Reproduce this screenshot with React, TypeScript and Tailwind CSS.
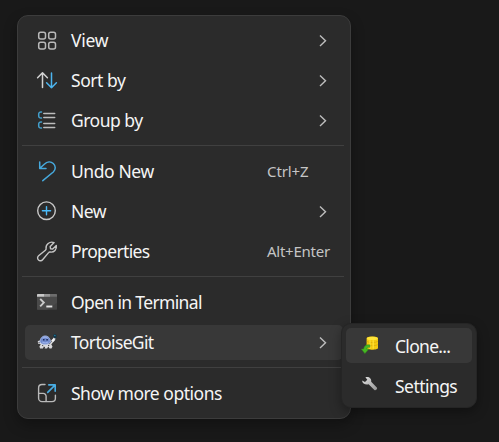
import type { ReactNode } from 'react';

const svg = 'block h-5 w-5 shrink-0 overflow-visible';

const ViewIcon = () => (
  <svg className={svg} viewBox="0 0 20 20" fill="none" stroke="#b9b9b9" strokeWidth="1.5">
    <rect x="1.7" y="1.2" width="6.8" height="6.8" rx="2" />
    <rect x="11.7" y="1.2" width="6.8" height="6.8" rx="2" />
    <rect x="1.7" y="11.2" width="6.8" height="6.8" rx="2" />
    <rect x="11.7" y="11.2" width="6.8" height="6.8" rx="2" />
  </svg>
);

const SortIcon = () => (
  <svg className={svg} viewBox="0 0 20 20" fill="none" strokeWidth="1.5" strokeLinecap="round" strokeLinejoin="round">
    <path d="M5.5 16.6V1.9M.6 6.8l4.9-5 4.9 5" stroke="#d2d2d2" />
    <path d="M14.5 2v14.7M9.6 11.8l4.9 5 4.9-5" stroke="#4cb5ef" />
  </svg>
);

const GroupIcon = () => (
  <svg className={svg} viewBox="0 0 20 20" fill="none" strokeWidth="1.5" strokeLinecap="round">
    <path d="M4.5.9H4A2.2 2.2 0 0 0 1.7 3.1v1.8A2.2 2.2 0 0 0 4 7.1h.5M4.5 10.9H4a2.2 2.2 0 0 0-2.3 2.2v1.8A2.2 2.2 0 0 0 4 17.1h.5" stroke="#429fcc" />
    <path d="M6.8 2.5h10.9M6.8 6.5h10.9M6.8 12.5h10.9M6.8 16.5h10.9" stroke="#bcbcbc" />
  </svg>
);

const UndoIcon = () => (
  <svg className={svg} viewBox="0 0 20 20" fill="none" stroke="#46a9dd" strokeWidth="1.5" strokeLinecap="round" strokeLinejoin="round">
    <path d="M2.7 0v6.4h6.3M2.9 6.3l4.4-4.1c2.8-2.6 6.5-3 9-.7 2.7 2.5 2.5 6.1 0 8.5L5.8 18.7" />
  </svg>
);

const NewIcon = () => (
  <svg className={svg} viewBox="0 0 20 20" fill="none" strokeWidth="1.4" strokeLinecap="round">
    <circle cx="9.5" cy="8.7" r="8.8" stroke="#c9c9c9" />
    <path d="M9.5 4.6v8.2M5.4 8.7h8.2" stroke="#4cbcfa" />
  </svg>
);

const WrenchIcon = () => (
  <svg className={svg} viewBox="0 0 20 20" fill="none" stroke="#c6c6c6" strokeWidth="1.4" strokeLinejoin="round">
    <path d="M17.1.6l-3.9 4 .3 2.1 2.2.4 3.6-3.6c.8 3.8-2.2 7.1-6.1 6.5-.7-.1-1.2.1-1.6.6l-6 7.1c-1 1.2-2.9 1.4-4.1.3-1.3-1.2-1.2-3.1.1-4.2l6.8-5.6c.5-.4.8-1 .7-1.7-.6-3.8 3.4-7.6 8-5.9Z" />
  </svg>
);

const TerminalIcon = () => (
  <svg className={svg} viewBox="0 0 20 20" fill="none">
    <rect y="1" width="20" height="15.8" rx=".8" fill="#424242" />
    <path d="M0 3.8h20v6L10 16.8H.8a.8.8 0 0 1-.8-.8Z" fill="#4a4a4a" />
    <path d="M.8 1H7v2.8H0v-2A.8.8 0 0 1 .8 1Z" fill="#c8c8c8" />
    <path d="M7 1h6v2.8H7Z" fill="#969696" />
    <path d="M13 1h6.2a.8.8 0 0 1 .8.8v2h-7Z" fill="#6d6d6d" />
    <path d="m3.2 5.9 3.6 3.7-3.6 3.7" stroke="#cacaca" strokeWidth="1.9" />
    <path d="M9.3 13.5h6" stroke="#e4e4e4" strokeWidth="1.9" />
  </svg>
);

const TortoiseIcon = () => (
  <svg className={svg} viewBox="0 0 20 20">
    <path d="M.8 8 3.2 7.6l1.5 3.2h8.1l2-2.6 1.8-3.7 1.8-.4-.2 3-2.6 2.7-1.3 1.6 1.2 2.2-1 2-2-.2-1.2-1.8-1.2 1.8H7.8l-.7-2.1-1.2 2.2-2.8-.1-.7-1.9 1.4-2.3L1 10.8Z" fill="#d9d9dc" />
    <path d="M2.9 9C3.3 5.3 5.1 3 8.2 3c3.1 0 5 2.2 5.3 6-1.7 2.8-8.6 3.3-10.6 0Z" fill="#6f89cb" stroke="#aabde9" strokeWidth=".9" />
    <path d="M5.4 5.3 8 4l3 1.2M5.2 9l3.1 1 3-1.1" stroke="#9db2ec" strokeWidth="1.1" fill="none" />
    <path d="M6 6.7h1.5M9.3 6.7h1.6" stroke="#1f2d60" strokeWidth="1.5" />
    <path d="m1.5 9.7 1.2.1M5.2 12.5l1 .2M11 12.5l1.3-.2M7.2 14l.5.9" stroke="#383840" strokeWidth="1" />
    <path d="m14 7.7 2.4-2.4 1.4 1.4-1.5 2.1Z" fill="#f2f4f6" />
    <path d="m16.3 1.8 2-.8 1.4 1.2-.4 2.9-2 .2-1-1.3Z" fill="#153648" />
    <path d="m17.2 2.3 1.3.5" stroke="#2381a3" strokeWidth="1.1" />
  </svg>
);

const MoreIcon = () => (
  <svg className={svg} viewBox="0 0 20 20" fill="none" strokeWidth="1.4" strokeLinecap="round" strokeLinejoin="round">
    <path d="M8 .5H5A3.4 3.4 0 0 0 1.6 3.9v10.3A3.4 3.4 0 0 0 5 17.6h10a3.4 3.4 0 0 0 3.4-3.4v-3M1.6 9.4h4.6a2.9 2.9 0 0 1 2.9 2.9v5.3" stroke="#b9b9b9" />
    <path d="M11.8.9h6.4v6.4M18 1.1l-7.3 7.3" stroke="#48ade3" strokeWidth="1.6" />
  </svg>
);

const CloneIcon = () => (
  <svg className={svg} viewBox="0 0 20 20">
    <path d="M5.6 2.4C5.6 0 17 0 17 2.4v9.7c0 2.3-11.4 2.3-11.4 0Z" fill="#f3c90f" />
    <ellipse cx="11.3" cy="2.4" rx="5.4" ry="1.6" fill="#ffe53a" />
    <path d="M5.8 5.4c1.7 1.5 9.3 1.5 11 0M5.8 8.6c1.7 1.5 9.3 1.5 11 0" stroke="#d7a708" strokeWidth=".7" fill="none" />
    <path d="M9 4.2v8.5M12.2 4.2v8.5" stroke="#ffe236" strokeWidth="1.2" />
    <path d="M8.9 8.9c-3.9-.4-5.9 1.2-6.3 4.2H.3l3.6 4.5 4-4.5H5.8c.1-1.4 1.3-2 3.1-1.8Z" fill="#45b722" stroke="#318b1b" strokeWidth=".5" />
  </svg>
);

const SettingsIcon = () => (
  <svg className={svg} viewBox="0 0 20 20">
    <defs>
      <linearGradient id="metal" x1="0" y1="0" x2="1" y2="1">
        <stop stopColor="#e2e2e2" />
        <stop offset="1" stopColor="#969696" />
      </linearGradient>
    </defs>
    <path d="M4.4 1.2c3.4-1.1 6.5 1.3 5.8 4.6l5.6 5.8c1.2 1.2-1.1 3.5-2.4 2.3L7.6 8.3C4.5 9.4 1.2 7.3 1.1 4.4L4 6l2.3-2.2Z" fill="url(#metal)" />
  </svg>
);

const Chevron = () => (
  <svg className="ml-auto mr-[16px] block h-[12px] w-[8px]" viewBox="0 0 8 12" fill="none" stroke="#bebebe" strokeWidth="1.4">
    <path d="m1 .6 5.5 5.2L1 11" />
  </svg>
);

const Divider = () => (
  <div className="-ml-[3px] -mr-[1px] h-[11px] pt-1">
    <div className="h-px w-full bg-[#404040]" />
  </div>
);

type RowProps = { icon: ReactNode; label: string; tracking: string; shortcut?: string; shortcutTracking?: string; arrow?: boolean; active?: boolean; sub?: boolean };

function Row({ icon, label, tracking, shortcut, shortcutTracking = '', arrow, active, sub }: RowProps) {
  return (
    <div className="h-10 pb-[3px] pt-[2px]">
      <div className={`flex h-[35px] items-center rounded-[5px] ${sub ? 'pl-[15px]' : 'pl-3'} ${active ? 'bg-[#383838]' : ''}`}>
        {icon}
        <span className={`ml-[14px] whitespace-nowrap text-[17.5px] leading-[24px] text-[#f5f5f5] ${sub ? '' : 'pb-[2px]'} ${tracking}`}>{label}</span>
        {arrow && <Chevron />}
        {shortcut && (
          <span className="ml-auto w-[76px] whitespace-nowrap pb-[2px] text-[15px] leading-5 text-[#c5c5c5]">
            <span className={shortcutTracking}>{shortcut}</span>
          </span>
        )}
      </div>
    </div>
  );
}

export default function App() {
  return (
    <main className="relative h-[442px] w-[499px] overflow-hidden bg-[#191919] pl-[17px] pt-[15px] font-['Noto_Sans','Open_Sans',sans-serif]">
      <section className="h-[404px] w-[334px] rounded-[11px] border border-[#3c3c3c] bg-[#2b2b2b] px-[7px] py-[5px] shadow-[0_6px_14px_rgba(0,0,0,0.3)]">
        <Row icon={<ViewIcon />} label="View" tracking="tracking-[-0.3px]" arrow />
        <Row icon={<SortIcon />} label="Sort by" tracking="tracking-[-0.45px]" arrow />
        <Row icon={<GroupIcon />} label="Group by" tracking="tracking-[-0.5px]" arrow />
        <Divider />
        <Row icon={<UndoIcon />} label="Undo New" tracking="tracking-[-0.42px]" shortcut="Ctrl+Z" shortcutTracking="tracking-[-0.1px]" />
        <Row icon={<NewIcon />} label="New" tracking="tracking-[-0.5px]" arrow />
        <Row icon={<WrenchIcon />} label="Properties" tracking="tracking-[-0.65px]" shortcut="Alt+Enter" shortcutTracking="tracking-[-0.25px]" />
        <Divider />
        <Row icon={<TerminalIcon />} label="Open in Terminal" tracking="tracking-[-0.65px]" />
        <Row icon={<TortoiseIcon />} label="TortoiseGit" tracking="tracking-[-0.64px]" arrow active />
        <Divider />
        <Row icon={<MoreIcon />} label="Show more options" tracking="tracking-[-0.49px]" />
      </section>
      <section className="absolute left-[341px] top-[323px] h-[85px] w-[136px] rounded-[10px] border border-[#252525] bg-[#2b2b2b] px-1 py-[2px] shadow-[0_4px_12px_rgba(0,0,0,0.35)]">
        <Row icon={<CloneIcon />} label="Clone..." tracking="tracking-[-0.7px]" active sub />
        <Row icon={<SettingsIcon />} label="Settings" tracking="tracking-[-0.55px]" sub />
      </section>
    </main>
  );
}
